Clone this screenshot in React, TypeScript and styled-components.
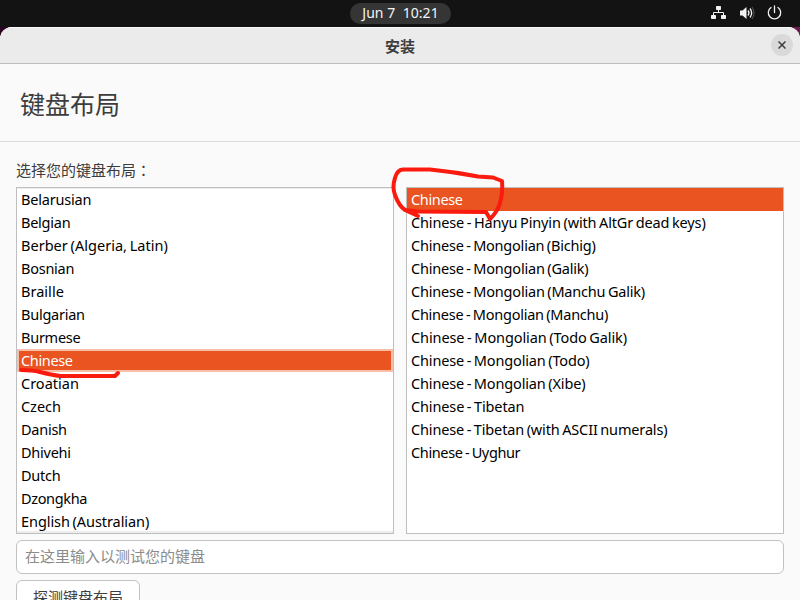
import React from "react";
import styled, { createGlobalStyle, css } from "styled-components";

const GlobalStyle = createGlobalStyle`
  * { box-sizing: border-box; }
  html, body { margin: 0; height: 600px; overflow: hidden; background: #2c001e; }
  body, input, button { font-family: "Noto Sans", "Noto Sans CJK SC", sans-serif; }
`;

const Desktop = styled.div`
  position: relative;
  width: 800px;
  height: 600px;
  overflow: hidden;
  display: flex;
  flex-direction: column;
  background: linear-gradient(90deg, #2c001e 0 50%, #6a1c4c 50%);
`;

const TopBar = styled.header`
  flex: none;
  height: 27px;
  display: grid;
  grid-template-columns: 350px 101px 1fr;
  align-items: center;
  background: #131313;
`;

const Clock = styled.time`
  grid-column: 2;
  height: 21px;
  border-radius: 11px;
  background: #353535;
  color: #f4f4f4;
  font-size: 14px;
  line-height: 20px;
  text-align: center;
  white-space: pre;
  letter-spacing: 0.05px;
`;

const Tray = styled.div`
  height: 27px;
  display: flex;
  justify-content: flex-end;
  padding: 5px 18px 0 0;
  color: #f2f2f2;
  svg { display: block; }
  svg + svg { margin-left: 12px; }
  svg:last-child { margin-left: 11px; }
`;

const Window = styled.main`
  flex: none;
  height: 573px;
  overflow: hidden;
  border-radius: 12px 12px 0 0;
  background: #fafafa;
  display: flex;
  flex-direction: column;
`;

const TitleBar = styled.div`
  flex: none;
  height: 37px;
  display: grid;
  grid-template-columns: 1fr auto 1fr;
  align-items: center;
  padding: 0 7px;
  background: #ebebeb;
  border-bottom: 1px solid #bdbdbd;
  box-shadow: inset 0 1px #fafafa;
`;

const WindowTitle = styled.h1`
  grid-column: 2;
  margin: 1px 0 0;
  font-size: 15px;
  line-height: 20px;
  font-weight: 700;
  color: #3d3d3d;
`;

const CloseButton = styled.button`
  justify-self: end;
  width: 22px;
  height: 22px;
  padding: 0;
  border: 0;
  border-radius: 50%;
  background: #d9d9d9;
  display: grid;
  place-items: center;
`;

const PageHeading = styled.h2`
  flex: none;
  height: 78px;
  margin: 0;
  padding: 2px 20px 0;
  border-bottom: 1px solid #dcdcdc;
  font-size: 25px;
  line-height: 76px;
  font-weight: 400;
  color: #3d3d3d;
`;

const Content = styled.section`
  padding: 16px 16px 0;
  display: flex;
  flex-direction: column;
  align-items: stretch;
`;

const Label = styled.label`
  height: 29px;
  font-size: 15px;
  line-height: 24px;
  color: #3d3d3d;
`;

const Colon = styled.span`
  font-family: "Noto Sans CJK TC", sans-serif;
  line-height: 1;
`;

const Lists = styled.div`
  display: grid;
  grid-template-columns: 378px 378px;
  gap: 12px;
`;

const List = styled.ul<{ $scrollable?: boolean }>`
  height: 347px;
  margin: 0;
  padding: 0;
  list-style: none;
  background: #fff;
  border: 1px solid #bfbfbf;
  ${(p) => p.$scrollable && css`box-shadow: inset 0 1px #ededed, inset 0 -2px #ededed;`}
`;

const Item = styled.li<{ $selected?: boolean; $focused?: boolean; $spacing: number }>`
  height: 23px;
  padding-left: 4px;
  font-size: 14.5px;
  line-height: 23px;
  letter-spacing: ${(p) => p.$spacing}px;
  word-spacing: -1px;
  white-space: nowrap;
  color: ${(p) => (p.$selected ? "#fff" : "#000")};
  background: ${(p) => (p.$selected ? "#e95420" : "transparent")};
  ${(p) => p.$focused && css`box-shadow: inset 0 0 0 2px #f6bfaa;`}
`;

const TestInput = styled.input`
  height: 34px;
  margin-top: 6px;
  padding: 0 8px 2px;
  border: 1px solid #c2c2c2;
  border-radius: 6px;
  background: #fff;
  font-size: 15px;
  outline: none;
  &::placeholder { color: #8b8b8b; opacity: 1; }
`;

const DetectButton = styled.button`
  width: 124px;
  height: 34px;
  margin-top: 6px;
  padding: 0 0 2px;
  border: 1px solid #c2c2c2;
  border-radius: 6px;
  background: #fff;
  font-size: 15px;
  color: #3d3d3d;
`;

const Marks = styled.svg`
  position: absolute;
  inset: 0;
  pointer-events: none;
`;

type Entry = [name: string, spacing: number];

const layouts: Entry[] = [
  ["Belarusian", -0.2], ["Belgian", -0.25], ["Berber (Algeria, Latin)", 0.02],
  ["Bosnian", -0.25], ["Braille", 0.03], ["Bulgarian", -0.25], ["Burmese", -0.25],
  ["Chinese", -0.35], ["Croatian", 0], ["Czech", -0.05], ["Danish", -0.25],
  ["Dhivehi", -0.25], ["Dutch", -0.25], ["Dzongkha", -0.35], ["English (Australian)", -0.07],
];

const variants: Entry[] = [
  ["Chinese", -0.35], ["Chinese - Hanyu Pinyin (with AltGr dead keys)", -0.14],
  ["Chinese - Mongolian (Bichig)", -0.22], ["Chinese - Mongolian (Galik)", -0.2],
  ["Chinese - Mongolian (Manchu Galik)", -0.2], ["Chinese - Mongolian (Manchu)", -0.25],
  ["Chinese - Mongolian (Todo Galik)", -0.1], ["Chinese - Mongolian (Todo)", -0.15],
  ["Chinese - Mongolian (Xibe)", -0.15], ["Chinese - Tibetan", -0.13],
  ["Chinese - Tibetan (with ASCII numerals)", -0.15], ["Chinese - Uyghur", -0.37],
];

const NetworkIcon = () => (
  <svg width="16" height="16" viewBox="0 0 16 16" fill="currentColor">
    <rect x="5" y="1" width="5" height="4" rx="0.7" />
    <rect x="0" y="10" width="5" height="4" rx="0.7" />
    <rect x="10" y="10" width="5" height="4" rx="0.7" />
    <path d="M7.500 5v2.500M2.500 10V7.500h10V10" fill="none" stroke="currentColor" strokeWidth="1" />
  </svg>
);

const VolumeIcon = () => (
  <svg width="16" height="16" viewBox="0 0 16 16" fill="none" stroke="currentColor">
    <path d="M1 5.500h2.500L7.500 2v12L3.500 10.500H1z" fill="currentColor" stroke="none" />
    <path d="M9 5.500q2 2.500 0 5" strokeWidth="1.300" />
    <path d="M11 3.500q3.300 4.500 0 9" strokeWidth="1.300" />
    <path d="M13 2q4 6 0 12" strokeWidth="1" opacity="0.3" />
  </svg>
);

const PowerIcon = () => (
  <svg width="16" height="16" viewBox="0 0 16 16" fill="none" stroke="currentColor" strokeWidth="1.300">
    <path d="M5 2.500a6.200 6.200 0 1 0 7 0M8.500 1v6.500" strokeLinecap="round" />
  </svg>
);

export default function App() {
  return (
    <Desktop>
      <GlobalStyle />
      <TopBar>
        <Clock>{"Jun 7  10:21"}</Clock>
        <Tray><NetworkIcon /><VolumeIcon /><PowerIcon /></Tray>
      </TopBar>
      <Window>
        <TitleBar>
          <WindowTitle>安装</WindowTitle>
          <CloseButton aria-label="关闭">
            <svg width="8" height="8" viewBox="0 0 8 8" stroke="#3d3d3d" strokeWidth="1.500">
              <path d="M.5.5l7 7M7.500.5l-7 7" />
            </svg>
          </CloseButton>
        </TitleBar>
        <PageHeading>键盘布局</PageHeading>
        <Content>
          <Label htmlFor="test">选择您的键盘布局<Colon lang="zh-TW">：</Colon></Label>
          <Lists>
            <List $scrollable>
              {layouts.map(([name, spacing]) => (
                <Item key={name} $spacing={spacing} $selected={name === "Chinese"} $focused={name === "Chinese"}>
                  {name}
                </Item>
              ))}
            </List>
            <List>
              {variants.map(([name, spacing]) => (
                <Item key={name} $spacing={spacing} $selected={name === "Chinese"}>{name}</Item>
              ))}
            </List>
          </Lists>
          <TestInput id="test" placeholder="在这里输入以测试您的键盘" />
          <DetectButton>探测键盘布局</DetectButton>
        </Content>
      </Window>
      <Marks width="800" height="600" fill="none" stroke="#fb1a0e" strokeWidth="4" strokeLinecap="round" strokeLinejoin="round">
        <path d="M418 216L405 210Q399 206 395 195Q392 187 395 178Q397 170 403 169.500L430 169.500Q455 172 478 176.500L493 177.500L502 181Q503 192 500 203Q498 211 490 219L486 212L418 211.500L405 210" />
        <path d="M21 370Q32 370 40 372Q52 375 60 376H115L118 373" />
      </Marks>
    </Desktop>
  );
}
